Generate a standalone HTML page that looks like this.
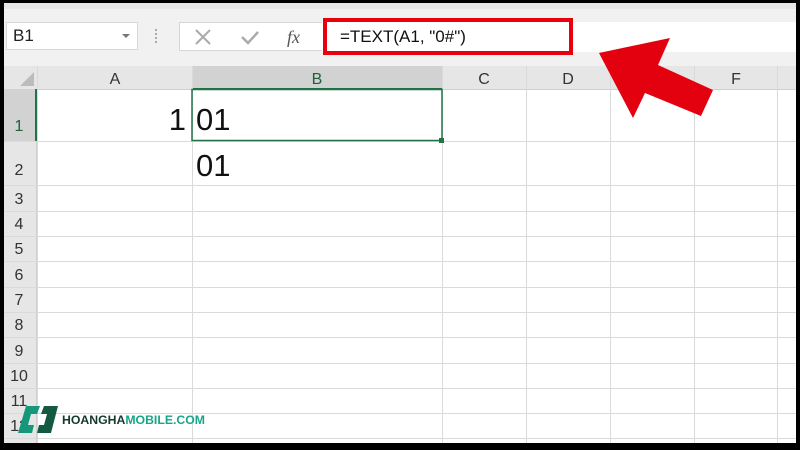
<!DOCTYPE html>
<html><head><meta charset="utf-8"><style>
*{margin:0;padding:0;box-sizing:border-box}
body{width:800px;height:450px;overflow:hidden;background:#000;position:relative;font-family:"Liberation Sans",sans-serif}
.a{position:absolute}
</style></head><body>
<div class="a" style="left:4px;top:3px;width:792px;height:440px;background:#fff"></div>
<div class="a" style="left:4px;top:3px;width:792px;height:6px;background:#e6e6e6"></div>
<div class="a" style="left:4px;top:9px;width:792px;height:57px;background:#f1f1f1"></div>
<div class="a" style="left:6px;top:22px;width:132px;height:28px;background:#fff;border:1px solid #d6d6d6"></div>
<div class="a" style="left:13px;top:26px;font-size:17px;color:#222">B1</div>
<div class="a" style="left:122px;top:34px;border-left:4px solid transparent;border-right:4px solid transparent;border-top:4px solid #777"></div>
<div class="a" style="left:155px;top:29px;width:2px;height:14px;border-left:2px dotted #aaa"></div>
<div class="a" style="left:179px;top:22px;width:144px;height:29px;background:#fff;border:1px solid #d6d6d6"></div>
<div class="a" style="left:322px;top:22px;width:474px;height:30px;background:#fff"></div>
<svg class="a" style="left:190px;top:26px" width="140" height="22"><path d="M6 4L20 18M20 4L6 18" stroke="#aaa" stroke-width="2"/><path d="M52 11l6 6 10-11" stroke="#aaa" stroke-width="2.5" fill="none"/><text x="97" y="17" font-family="Liberation Serif" font-style="italic" font-size="18" fill="#555">fx</text></svg>
<div class="a" style="left:323px;top:18px;width:250px;height:37px;border:4px solid #e8000e"></div>
<div class="a" style="left:340px;top:27px;font-size:17px;color:#111">=TEXT(A1, "0#")</div>
<div class="a" style="left:4px;top:66px;width:792px;height:24px;background:#e6e6e6;border-bottom:1px solid #cfcfcf"></div>
<div class="a" style="left:192px;top:66px;width:250px;height:24px;background:#d2d2d2;border-bottom:2px solid #217346"></div>
<svg class="a" style="left:18px;top:70px" width="18" height="18"><path d="M16 2V16H2Z" fill="#bcbcbc"/></svg>
<div class="a" style="left:4px;top:89px;width:33px;height:354px;background:#e6e6e6;border-right:1px solid #cfcfcf"></div>
<div class="a" style="left:4px;top:89px;width:33px;height:52px;background:#d2d2d2;border-right:2px solid #217346"></div>
<svg class="a" style="left:0;top:0" width="800" height="450">
<g stroke="#dadada" stroke-width="1">
<line x1="37.5" y1="66" x2="37.5" y2="443"/><line x1="192.5" y1="66" x2="192.5" y2="443"/><line x1="442.5" y1="66" x2="442.5" y2="443"/><line x1="526.5" y1="66" x2="526.5" y2="443"/><line x1="610.5" y1="66" x2="610.5" y2="443"/><line x1="694.5" y1="66" x2="694.5" y2="443"/><line x1="777.5" y1="66" x2="777.5" y2="443"/>
<line x1="4" y1="141.5" x2="796" y2="141.5"/><line x1="4" y1="185.5" x2="796" y2="185.5"/>
<line x1="4" y1="211.5" x2="796" y2="211.5"/><line x1="4" y1="236.5" x2="796" y2="236.5"/><line x1="4" y1="261.5" x2="796" y2="261.5"/><line x1="4" y1="287.5" x2="796" y2="287.5"/><line x1="4" y1="312.5" x2="796" y2="312.5"/><line x1="4" y1="337.5" x2="796" y2="337.5"/><line x1="4" y1="363.5" x2="796" y2="363.5"/><line x1="4" y1="388.5" x2="796" y2="388.5"/><line x1="4" y1="413.5" x2="796" y2="413.5"/><line x1="4" y1="438.5" x2="796" y2="438.5"/>
</g>
<rect x="192" y="89.5" width="250" height="51" fill="none" stroke="#217346" stroke-width="1.5"/>
<rect x="439" y="138" width="5" height="5" fill="#217346"/>
<g font-family="Liberation Sans" font-size="16" fill="#333" text-anchor="middle">
<text x="115" y="84">A</text><text x="317" y="84" fill="#1f5f3a">B</text><text x="484" y="84">C</text><text x="568" y="84">D</text><text x="652" y="84">E</text><text x="736" y="84">F</text>
<text x="19" y="131" fill="#1f5f3a">1</text><text x="19" y="175">2</text><text x="19" y="204">3</text><text x="19" y="229">4</text><text x="19" y="254">5</text><text x="19" y="280">6</text><text x="19" y="305">7</text><text x="19" y="330">8</text><text x="19" y="356">9</text><text x="19" y="381">10</text><text x="19" y="406">11</text><text x="19" y="431">12</text>
</g>
<g font-family="Liberation Sans" font-size="31" fill="#111">
<text x="186" y="130" text-anchor="end">1</text><text x="196" y="130">01</text><text x="196" y="176">01</text>
</g>
<polygon points="599,53 670,38 658,65 713,90 701,116 645,93 633,118" fill="#e3000f"/>
<path d="M26 406H40L37 414H31L28 425H34L32 433H18Z" fill="#17977a"/>
<path d="M44 406H58L51 433H37L39 425H44L47 414H41Z" fill="#145a43"/>
<text x="62" y="424" font-family="Liberation Sans" font-weight="bold" font-size="12" textLength="143" lengthAdjust="spacingAndGlyphs" fill="#17382f">HOANGHA<tspan fill="#17a589">MOBILE.COM</tspan></text>
</svg>
</body></html>
